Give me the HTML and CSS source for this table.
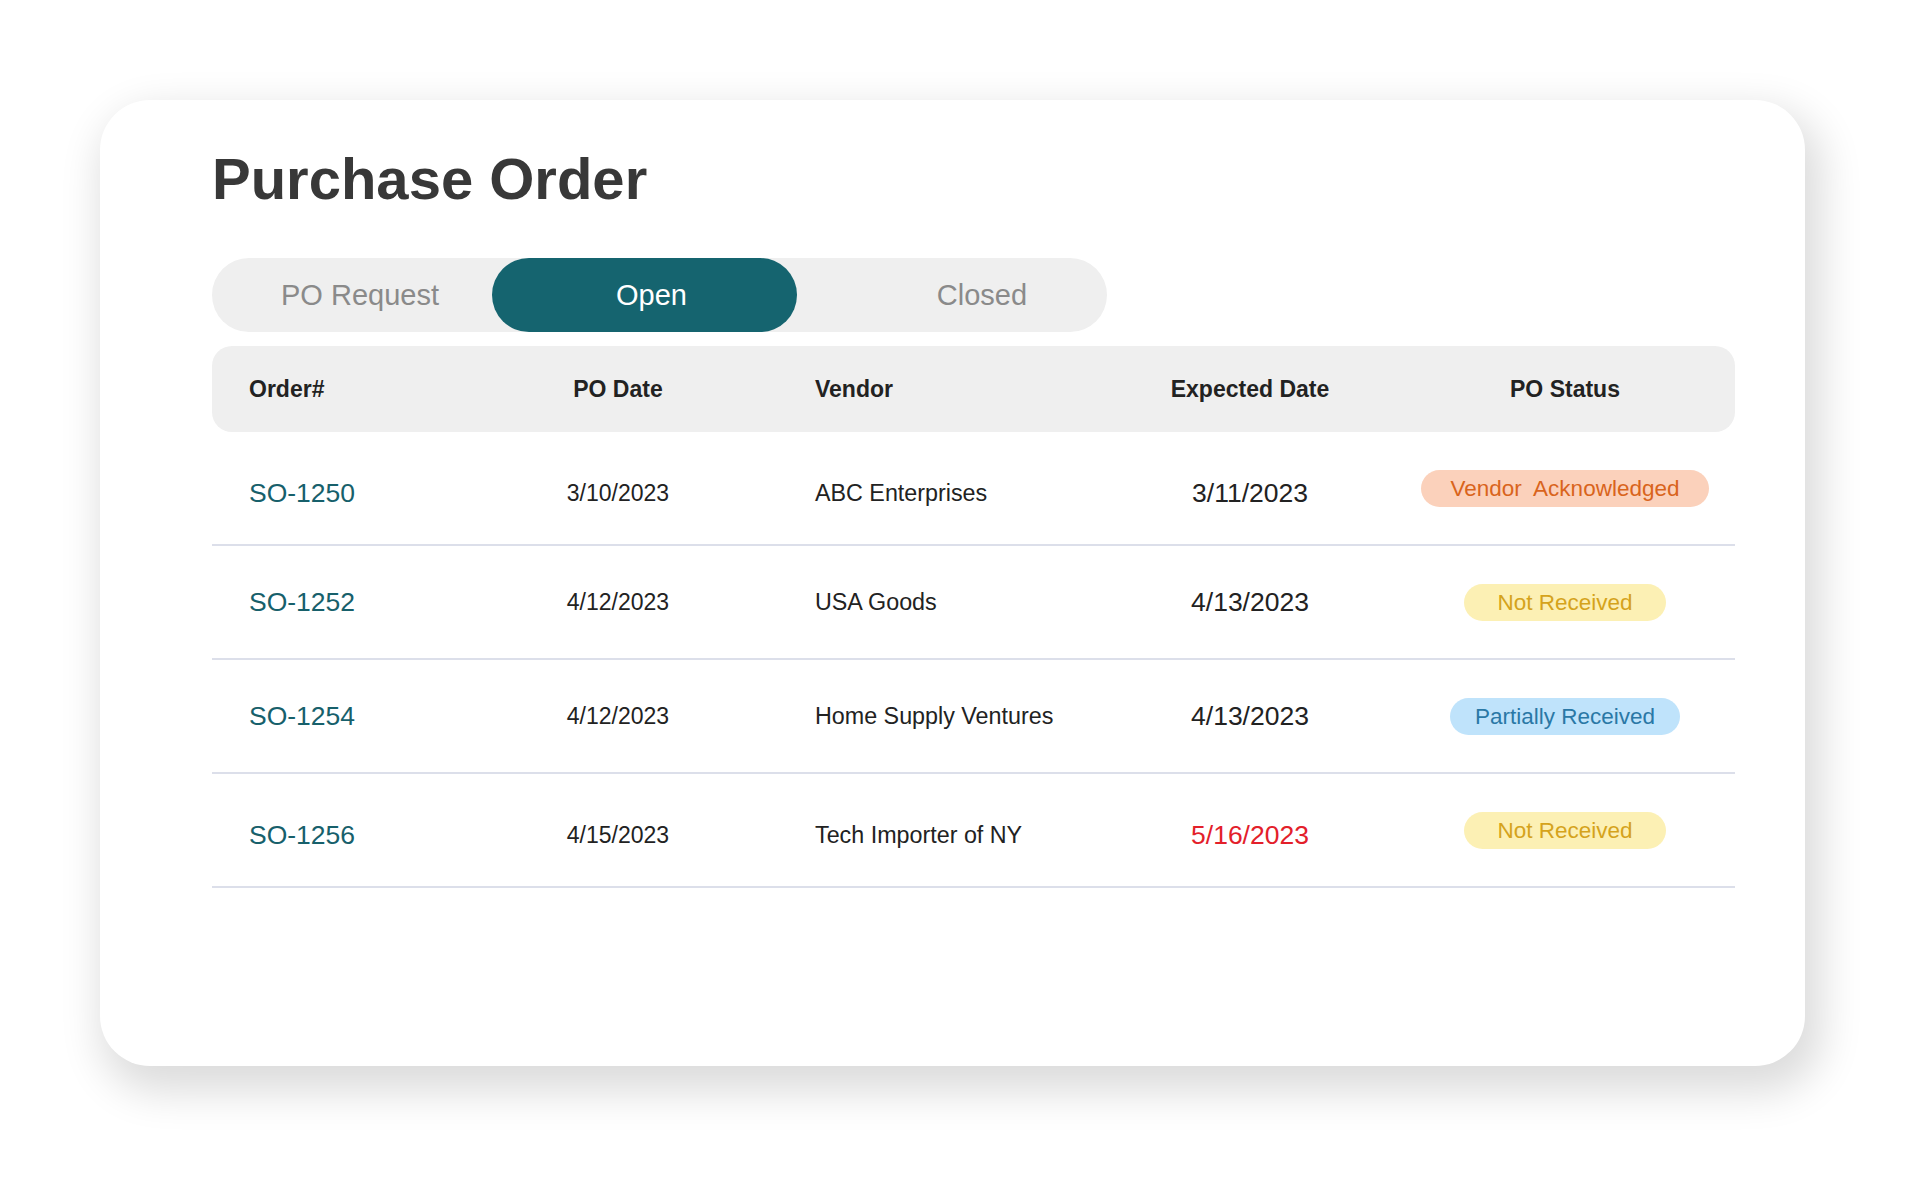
FILE: index.html
```html
<!DOCTYPE html>
<html lang="en">
<head>
<meta charset="utf-8">
<title>Purchase Order</title>
<link rel="stylesheet" href="styles.css">
</head>
<body>
<div class="card">
  <h1 class="title">Purchase Order</h1>
  <div class="tabs">
    <div class="tab tab-request">PO Request</div>
    <div class="tab tab-open active">Open</div>
    <div class="tab tab-closed">Closed</div>
  </div>
  <div class="table">
    <div class="thead">
      <div class="cell left first">Order#</div>
      <div class="cell center">PO Date</div>
      <div class="cell left vendor">Vendor</div>
      <div class="cell center">Expected Date</div>
      <div class="cell center">PO Status</div>
    </div>
    <div class="row row-low">
      <div class="cell left first order">SO-1250</div>
      <div class="cell center date">3/10/2023</div>
      <div class="cell left vendor vname">ABC Enterprises</div>
      <div class="cell center expected">3/11/2023</div>
      <div class="cell center status"><span class="badge badge-orange">Vendor&nbsp; Acknowledged</span></div>
    </div>
    <div class="row">
      <div class="cell left first order">SO-1252</div>
      <div class="cell center date">4/12/2023</div>
      <div class="cell left vendor vname">USA Goods</div>
      <div class="cell center expected">4/13/2023</div>
      <div class="cell center status"><span class="badge badge-yellow">Not Received</span></div>
    </div>
    <div class="row">
      <div class="cell left first order">SO-1254</div>
      <div class="cell center date">4/12/2023</div>
      <div class="cell left vendor vname">Home Supply Ventures</div>
      <div class="cell center expected">4/13/2023</div>
      <div class="cell center status"><span class="badge badge-blue">Partially Received</span></div>
    </div>
    <div class="row row-low">
      <div class="cell left first order">SO-1256</div>
      <div class="cell center date">4/15/2023</div>
      <div class="cell left vendor vname">Tech Importer of NY</div>
      <div class="cell center expected overdue">5/16/2023</div>
      <div class="cell center status"><span class="badge badge-yellow">Not Received</span></div>
    </div>
  </div>
</div>
</body>
</html>
```

FILE: styles.css
```css
* { box-sizing: border-box; }

html, body {
  margin: 0;
  padding: 0;
  background: #ffffff;
  font-family: "Liberation Sans", Arial, Helvetica, sans-serif;
}

body {
  min-height: 1181px;
  padding: 100px 0 0 100px;
}

.card {
  width: 1705px;
  height: 966px;
  background: #ffffff;
  border-radius: 50px;
  box-shadow: 9px 18px 42px 8px rgba(0, 0, 0, 0.14);
  padding: 50px 70px 0 112px;
}

.title {
  margin: 0;
  font-size: 58px;
  line-height: 58px;
  font-weight: 700;
  color: #383838;
}

.tabs {
  margin-top: 50px;
  width: 895px;
  height: 74px;
  border-radius: 37px;
  background: #efefef;
  display: flex;
}

.tab {
  height: 74px;
  line-height: 74px;
  font-size: 29px;
  color: #8a8a8a;
  text-align: center;
}

.tab-request { width: 280px; padding-left: 16px; }
.tab-open { width: 305px; padding-left: 14px; }
.tab-closed { flex: 1; padding-left: 60px; }

.tab.active {
  background: #15646f;
  color: #ffffff;
  border-radius: 37px;
}

.table {
  margin-top: 14px;
  width: 1523px;
}

.thead, .row {
  display: grid;
  grid-template-columns: 288px 236px 369px 290px 340px;
  align-items: center;
}

.thead {
  height: 86px;
  background: #efefef;
  border-radius: 20px;
  font-size: 23px;
  font-weight: 700;
  color: #222222;
}

.row {
  height: 114px;
  border-bottom: 2px solid #dcdfea;
}

.row-low .cell:not(.status) {
  padding-top: 11px;
}

.cell.left { text-align: left; }
.cell.center { text-align: center; }
.cell.first { padding-left: 37px; }
.cell.vendor { padding-left: 79px; }

.order {
  font-size: 26.5px;
  color: #17606b;
}

.date {
  font-size: 23px;
  color: #222222;
}

.vname {
  font-size: 23.3px;
  color: #222222;
}

.expected {
  font-size: 26.5px;
  color: #222222;
}

.expected.overdue {
  color: #e3202a;
}

.badge {
  display: inline-block;
  height: 37px;
  line-height: 37px;
  border-radius: 19px;
  font-size: 22.5px;
  white-space: nowrap;
}

.badge-orange {
  background: #fbd1bb;
  color: #d9641c;
  padding: 0 30px;
}

.badge-yellow {
  background: #fcf0b4;
  color: #d5a31c;
  padding: 0 33px;
}

.badge-blue {
  background: #bfe3fb;
  color: #2a78a6;
  padding: 0 25px;
}
```
